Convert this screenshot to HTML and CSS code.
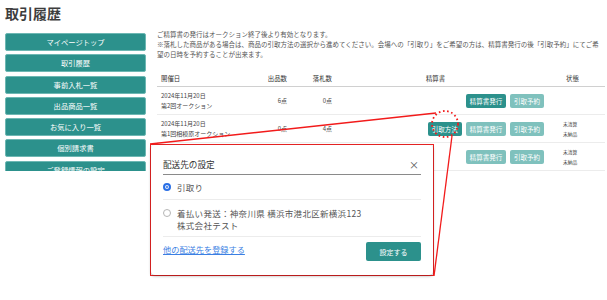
FILE: index.html
```html
<!DOCTYPE html>
<html lang="ja">
<head>
    <meta charset="UTF-8">
    <meta name="viewport" content="width=device-width, initial-scale=1.0">
    <title>取引履歴</title>
    <link rel="stylesheet" href="styles.css">
</head>
<body>

    <div class="screen">
        <h1 class="page-title">取引履歴</h1>

        <div class="layout">
            <nav class="side-menu">
                <a class="menu-btn" href="#">マイページトップ</a>
                <a class="menu-btn" href="#">取引履歴</a>
                <a class="menu-btn" href="#">事前入札一覧</a>
                <a class="menu-btn" href="#">出品商品一覧</a>
                <a class="menu-btn" href="#">お気に入り一覧</a>
                <a class="menu-btn" href="#">個別請求書</a>
                <a class="menu-btn" href="#">ご登録情報の設定</a>
            </nav>

            <section class="content">
                <p class="notice">
                    ご精算書の発行はオークション終了後より有効となります。<br>
                    ※落札した商品がある場合は、商品の引取方法の選択から進めてください。会場への「引取り」をご希望の方は、精算書発行の後「引取予約」にてご希望の日時を予約することが出来ます。
                </p>

                <table class="history">
                    <thead>
                        <tr>
                            <th class="col-date">開催日</th>
                            <th class="col-num">出品数</th>
                            <th class="col-num col-won">落札数</th>
                            <th class="col-bill">精算書</th>
                            <th class="col-status">状態</th>
                        </tr>
                    </thead>
                    <tbody>
                        <tr>
                            <td class="col-date">2024年11月20日<br>第2回オークション</td>
                            <td class="col-num">6点</td>
                            <td class="col-num col-won">0点</td>
                            <td class="col-bill">
                                <button class="btn">精算書発行</button>
                                <button class="btn off">引取予約</button>
                            </td>
                            <td class="col-status"></td>
                        </tr>
                        <tr>
                            <td class="col-date">2024年11月20日<br>第1回相模原オークション</td>
                            <td class="col-num">0点</td>
                            <td class="col-num col-won">4点</td>
                            <td class="col-bill">
                                <button class="btn">引取方法</button>
                                <button class="btn off">精算書発行</button>
                                <button class="btn off">引取予約</button>
                            </td>
                            <td class="col-status"><span>未清算<br>未納品</span></td>
                        </tr>
                        <tr>
                            <td class="col-date"></td>
                            <td class="col-num"></td>
                            <td class="col-num col-won"></td>
                            <td class="col-bill">
                                <button class="btn off">精算書発行</button>
                                <button class="btn off">引取予約</button>
                            </td>
                            <td class="col-status"><span>未清算<br>未納品</span></td>
                        </tr>
                    </tbody>
                </table>
            </section>
        </div>
    </div>

    <!-- callout: the dialog opened by 引取方法 -->
    <div class="callout">
        <div class="modal">
            <div class="modal-header">
                <span class="modal-title">配送先の設定</span>
                <span class="modal-close">×</span>
            </div>
            <label class="option">
                <span class="radio checked"></span>
                <span>引取り</span>
            </label>
            <label class="option">
                <span class="radio"></span>
                <span>着払い発送：神奈川県 横浜市港北区新横浜123<br>株式会社テスト</span>
            </label>
            <div class="modal-footer">
                <a class="add-link" href="#">他の配送先を登録する</a>
                <button class="btn-submit">設定する</button>
            </div>
        </div>
    </div>

    <svg class="annotation" width="607" height="300" viewBox="0 0 607 300">
        <circle cx="445" cy="124" r="13" fill="none" stroke="#f21b1b" stroke-width="1.8" stroke-dasharray="1.6 2.6"/>
        <line x1="436" y1="113" x2="150" y2="144" stroke="#f21b1b" stroke-width="1.3"/>
        <line x1="452" y1="136" x2="434" y2="276" stroke="#f21b1b" stroke-width="1.3"/>
    </svg>

</body>
</html>
```

FILE: styles.css
```css
body {
    margin: 0;
    font-family: "Noto Sans CJK JP", "Noto Sans", sans-serif;
    background-color: #fff;
    color: #444;
}
.screen {
    height: 168px;
    overflow: hidden;
    padding: 3px 2px 0 5px;
}
.page-title {
    margin: 0;
    font-size: 14px;
    line-height: 20px;
    font-weight: bold;
    color: #3d3d3d;
}
.layout {
    display: grid;
    grid-template-columns: 141px 1fr;
    column-gap: 11px;
    margin-top: 7px;
}
.side-menu {
    display: flex;
    flex-direction: column;
    gap: 3.3px;
    padding-top: 3px;
}
.menu-btn {
    display: block;
    height: 18px;
    line-height: 16px;
    box-sizing: border-box;
    border: 1px solid #6db7b3;
    border-radius: 2px;
    background-color: #2c918c;
    color: #fff;
    font-size: 7.3px;
    text-align: center;
    text-decoration: none;
}
.notice {
    margin: 0 0 11px;
    font-size: 6.5px;
    line-height: 9.8px;
    color: #555;
}
.history {
    width: 448px;
    border-collapse: collapse;
    table-layout: fixed;
    font-size: 6px;
    color: #444;
}
.history th {
    height: 16px;
    padding: 0 4px;
    font-weight: normal;
    font-size: 6.4px;
    color: #333;
    text-align: left;
    border-bottom: 1.5px solid #d0d0d0;
}
.history td {
    height: 27px;
    padding: 0 4px;
    line-height: 10px;
    vertical-align: middle;
    border-bottom: 1px solid #ececec;
}
.col-date {
    width: 90px;
}
.history .col-num {
    width: 28px;
    text-align: right;
}
.history .col-won {
    width: 37px;
}
.history .col-bill {
    width: 199px;
    padding-right: 7px;
    text-align: right;
}
.history th.col-bill {
    text-align: center;
    padding-left: 0;
    padding-right: 16px;
}
.history .col-status {
    padding-left: 12px;
}
.history th.col-status {
    padding-left: 15px;
}
.col-status span {
    display: inline-block;
    font-size: 4.8px;
    line-height: 10px;
}
.btn {
    height: 14.5px;
    margin-left: 2.5px;
    padding: 0 4px;
    border: none;
    border-radius: 2px;
    background-color: #2c918c;
    color: #fff;
    font-family: inherit;
    font-size: 6.5px;
    line-height: 14.5px;
    vertical-align: middle;
}
.btn.off {
    background-color: #7fc1bd;
}

/* dialog pasted over the page */
.callout {
    position: absolute;
    left: 150px;
    top: 144px;
    width: 284px;
    height: 132px;
    box-sizing: border-box;
    border: 1.5px solid #ef2525;
    background-color: #fff;
}
.modal {
    height: 100%;
    box-sizing: border-box;
    padding: 0 12px;
    border-radius: 4px;
    box-shadow: 0 1px 3px rgba(0, 0, 0, 0.35);
    font-size: 8.5px;
    color: #555;
}
.modal-header {
    display: flex;
    justify-content: space-between;
    align-items: flex-end;
    padding: 13px 0 4px;
    border-bottom: 1px solid #8a8a8a;
}
.modal-title {
    font-size: 8.6px;
    line-height: 12px;
    color: #333;
}
.modal-close {
    font-size: 10px;
    line-height: 10px;
    padding-right: 2px;
    color: #555;
}
.option {
    display: flex;
    align-items: flex-start;
    gap: 6px;
    padding: 6px 0;
    line-height: 12px;
    letter-spacing: 0.3px;
    border-bottom: 1px solid #ececec;
}
.option + .option {
    padding: 7px 0 5px;
}
.radio {
    flex: none;
    width: 8px;
    height: 8px;
    margin-top: 2px;
    box-sizing: border-box;
    border: 1px solid #b5b5b5;
    border-radius: 50%;
}
.radio.checked {
    border: 2.5px solid #2a6fe5;
    box-shadow: inset 0 0 0 1px #fff, inset 0 0 0 4px #2a6fe5;
}
.modal-footer {
    display: flex;
    justify-content: space-between;
    align-items: flex-start;
    padding-top: 5px;
}
.add-link {
    margin-top: 1px;
    font-size: 8.2px;
    line-height: 12px;
    color: #3b7fe3;
}
.btn-submit {
    width: 55px;
    height: 19px;
    border: none;
    border-radius: 2px;
    background-color: #2c918c;
    color: #fff;
    font-family: inherit;
    font-size: 7px;
}

.annotation {
    position: absolute;
    left: 0;
    top: 0;
    pointer-events: none;
}
```
